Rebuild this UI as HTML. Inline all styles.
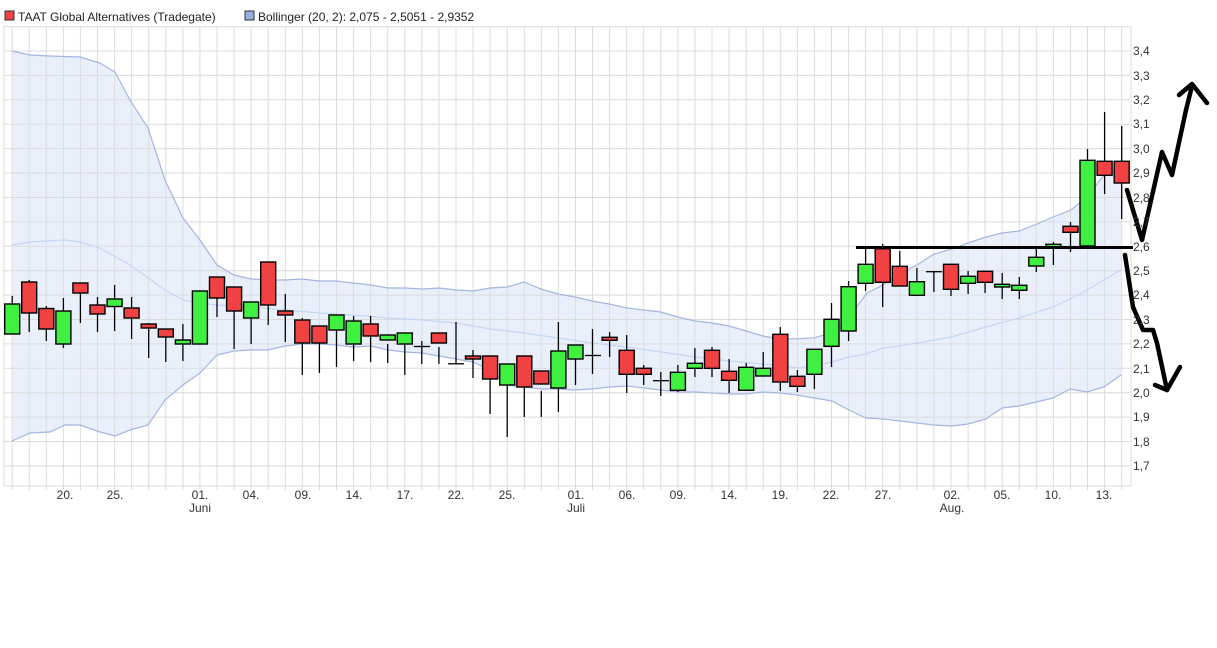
<!DOCTYPE html>
<html><head><meta charset="utf-8"><style>
html,body{margin:0;padding:0;background:#fff;}
svg{display:block;font-family:"Liberation Sans",sans-serif;}
.g line{stroke:#dcdcdc;stroke-width:1}
.w line{stroke:#000;stroke-width:1.3}
.r{fill:#f04242;stroke:#000;stroke-width:1.4}
.n{fill:#40f040;stroke:#000;stroke-width:1.4}
.ax text{font-size:12px;fill:#333}
</style></head><body>
<svg width="1217" height="648" viewBox="0 0 1217 648">
<rect x="5" y="11" width="9" height="9" fill="#f04242" stroke="#333" stroke-width="1"/>
<text x="18" y="21" font-size="12" fill="#222">TAAT Global Alternatives (Tradegate)</text>
<rect x="245" y="11" width="9" height="9" fill="#98aee0" stroke="#333" stroke-width="1"/>
<text x="258" y="21" font-size="12" fill="#222">Bollinger (20, 2): 2,075 - 2,5051 - 2,9352</text>

<polygon fill="#e9f0fc" points="12,51 30,55 50,56 80,57 100,63 115,72 130,100 148,128 165,180 183,218 200,240 217,265 234,275 251,279 268,280 285,280 302,279 319,281 336,281 353,283 371,285 388,288 405,288 422,289 439,288 456,290 473,291 490,288 507,287 524,282 541,289 558,294 575,297 592,301 609,304 627,308 644,310 661,312 678,317 695,321 712,323 729,326 746,331 763,336 780,339 800,338.7 814,337.7 832,333 849,317 867,293 883,285 900,273 917,265 934,254 952,249 968,243 986,237 1002,233 1019,231 1037,224 1053,217 1071,210 1087,197 1104,175 1121,167 1121,375 1104,387 1087,392 1070,389 1053,398 1036,402 1019,406 1002,408 986,419 968,424 952,426 934,425 917,423 900,421 883,419 866,418 849,410 832,401 814,398 797,395 780,393 763,392 746,394 729,394 712,393 695,392 678,392 661,390 644,388 627,386 609,387 592,389 575,390 558,389 541,389 524,387 507,385 490,370 473,362 456,359 439,356 422,353 405,352 388,350 371,346 353,347 336,345 319,344 302,344 285,346 268,350 251,350 234,351 217,355 200,373 183,385 165,400 148,425 130,430 115,436 100,432 80,425 65,425 50,432 30,433 12,441"/>

<g class="g">
<line x1="4" y1="26.6" x2="1131" y2="26.6"/><line x1="4" y1="51" x2="1131" y2="51"/><line x1="4" y1="75.4" x2="1131" y2="75.4"/><line x1="4" y1="99.8" x2="1131" y2="99.8"/><line x1="4" y1="124.2" x2="1131" y2="124.2"/><line x1="4" y1="148.6" x2="1131" y2="148.6"/><line x1="4" y1="173" x2="1131" y2="173"/><line x1="4" y1="197.5" x2="1131" y2="197.5"/><line x1="4" y1="221.9" x2="1131" y2="221.9"/><line x1="4" y1="246.3" x2="1131" y2="246.3"/><line x1="4" y1="270.7" x2="1131" y2="270.7"/><line x1="4" y1="295.1" x2="1131" y2="295.1"/><line x1="4" y1="319.5" x2="1131" y2="319.5"/><line x1="4" y1="343.9" x2="1131" y2="343.9"/><line x1="4" y1="368.3" x2="1131" y2="368.3"/><line x1="4" y1="392.7" x2="1131" y2="392.7"/><line x1="4" y1="417.1" x2="1131" y2="417.1"/><line x1="4" y1="441.5" x2="1131" y2="441.5"/><line x1="4" y1="465.9" x2="1131" y2="465.9"/><line x1="4" y1="486" x2="1131" y2="486"/>
<line x1="4" y1="26" x2="4" y2="486"/><line x1="1131" y1="26" x2="1131" y2="486"/>
<line x1="12.2" y1="26" x2="12.2" y2="490"/><line x1="29.2" y1="26" x2="29.2" y2="490"/><line x1="46.3" y1="26" x2="46.3" y2="490"/><line x1="63.4" y1="26" x2="63.4" y2="490"/><line x1="80.4" y1="26" x2="80.4" y2="490"/><line x1="97.5" y1="26" x2="97.5" y2="490"/><line x1="114.6" y1="26" x2="114.6" y2="490"/><line x1="131.6" y1="26" x2="131.6" y2="490"/><line x1="148.7" y1="26" x2="148.7" y2="490"/><line x1="165.8" y1="26" x2="165.8" y2="490"/><line x1="182.9" y1="26" x2="182.9" y2="490"/><line x1="199.9" y1="26" x2="199.9" y2="490"/><line x1="217" y1="26" x2="217" y2="490"/><line x1="234.1" y1="26" x2="234.1" y2="490"/><line x1="251.1" y1="26" x2="251.1" y2="490"/><line x1="268.2" y1="26" x2="268.2" y2="490"/><line x1="285.3" y1="26" x2="285.3" y2="490"/><line x1="302.3" y1="26" x2="302.3" y2="490"/><line x1="319.4" y1="26" x2="319.4" y2="490"/><line x1="336.5" y1="26" x2="336.5" y2="490"/><line x1="353.6" y1="26" x2="353.6" y2="490"/><line x1="370.6" y1="26" x2="370.6" y2="490"/><line x1="387.7" y1="26" x2="387.7" y2="490"/><line x1="404.8" y1="26" x2="404.8" y2="490"/><line x1="421.8" y1="26" x2="421.8" y2="490"/><line x1="438.9" y1="26" x2="438.9" y2="490"/><line x1="456" y1="26" x2="456" y2="490"/><line x1="473" y1="26" x2="473" y2="490"/><line x1="490.1" y1="26" x2="490.1" y2="490"/><line x1="507.2" y1="26" x2="507.2" y2="490"/><line x1="524.3" y1="26" x2="524.3" y2="490"/><line x1="541.3" y1="26" x2="541.3" y2="490"/><line x1="558.4" y1="26" x2="558.4" y2="490"/><line x1="575.5" y1="26" x2="575.5" y2="490"/><line x1="592.5" y1="26" x2="592.5" y2="490"/><line x1="609.6" y1="26" x2="609.6" y2="490"/><line x1="626.7" y1="26" x2="626.7" y2="490"/><line x1="643.7" y1="26" x2="643.7" y2="490"/><line x1="660.8" y1="26" x2="660.8" y2="490"/><line x1="677.9" y1="26" x2="677.9" y2="490"/><line x1="694.9" y1="26" x2="694.9" y2="490"/><line x1="712" y1="26" x2="712" y2="490"/><line x1="729.1" y1="26" x2="729.1" y2="490"/><line x1="746.2" y1="26" x2="746.2" y2="490"/><line x1="763.2" y1="26" x2="763.2" y2="490"/><line x1="780.3" y1="26" x2="780.3" y2="490"/><line x1="797.4" y1="26" x2="797.4" y2="490"/><line x1="814.4" y1="26" x2="814.4" y2="490"/><line x1="831.5" y1="26" x2="831.5" y2="490"/><line x1="848.6" y1="26" x2="848.6" y2="490"/><line x1="865.6" y1="26" x2="865.6" y2="490"/><line x1="882.7" y1="26" x2="882.7" y2="490"/><line x1="899.8" y1="26" x2="899.8" y2="490"/><line x1="916.9" y1="26" x2="916.9" y2="490"/><line x1="933.9" y1="26" x2="933.9" y2="490"/><line x1="951" y1="26" x2="951" y2="490"/><line x1="968.1" y1="26" x2="968.1" y2="490"/><line x1="985.1" y1="26" x2="985.1" y2="490"/><line x1="1002.2" y1="26" x2="1002.2" y2="490"/><line x1="1019.3" y1="26" x2="1019.3" y2="490"/><line x1="1036.3" y1="26" x2="1036.3" y2="490"/><line x1="1053.4" y1="26" x2="1053.4" y2="490"/><line x1="1070.5" y1="26" x2="1070.5" y2="490"/><line x1="1087.5" y1="26" x2="1087.5" y2="490"/><line x1="1104.6" y1="26" x2="1104.6" y2="490"/><line x1="1121.7" y1="26" x2="1121.7" y2="490"/>
</g>

<polyline fill="none" stroke="#a3b6e2" stroke-width="1.2" points="12,51 30,55 50,56 80,57 100,63 115,72 130,100 148,128 165,180 183,218 200,240 217,265 234,275 251,279 268,280 285,280 302,279 319,281 336,281 353,283 371,285 388,288 405,288 422,289 439,288 456,290 473,291 490,288 507,287 524,282 541,289 558,294 575,297 592,301 609,304 627,308 644,310 661,312 678,317 695,321 712,323 729,326 746,331 763,336 780,339 800,338.7 814,337.7 832,333 849,317 867,293 883,285 900,273 917,265 934,254 952,249 968,243 986,237 1002,233 1019,231 1037,224 1053,217 1071,210 1087,197 1104,175 1121,167"/>
<polyline fill="none" stroke="#a3b6e2" stroke-width="1.2" points="1121,375 1104,387 1087,392 1070,389 1053,398 1036,402 1019,406 1002,408 986,419 968,424 952,426 934,425 917,423 900,421 883,419 866,418 849,410 832,401 814,398 797,395 780,393 763,392 746,394 729,394 712,393 695,392 678,392 661,390 644,388 627,386 609,387 592,389 575,390 558,389 541,389 524,387 507,385 490,370 473,362 456,359 439,356 422,353 405,352 388,350 371,346 353,347 336,345 319,344 302,344 285,346 268,350 251,350 234,351 217,355 200,373 183,385 165,400 148,425 130,430 115,436 100,432 80,425 65,425 50,432 30,433 12,441"/>
<polyline fill="none" stroke="#c5d5f5" stroke-width="1.2" points="12,245 30,242 65,240 80,242 100,248 130,265 165,290 183,300 200,303 217,305 251,307 285,310 319,313 353,315 388,318 422,320 456,323 490,329 524,333 558,338 592,343 627,347 661,352 695,357 729,361 763,364 800,368 832,362 849,357 866,354 883,348 900,346 951,337 986,327 1019,318 1053,307 1070,299 1087,290 1104,280 1121,270"/>

<g class="w">
<line x1="12.2" y1="296" x2="12.2" y2="334"/><line x1="29.2" y1="280" x2="29.2" y2="332"/><line x1="46.3" y1="306" x2="46.3" y2="341"/><line x1="63.4" y1="298" x2="63.4" y2="348"/><line x1="80.4" y1="291" x2="80.4" y2="323"/><line x1="97.5" y1="297" x2="97.5" y2="332"/><line x1="114.6" y1="285" x2="114.6" y2="331"/><line x1="131.6" y1="297" x2="131.6" y2="339"/><line x1="148.7" y1="323" x2="148.7" y2="358"/><line x1="165.8" y1="330" x2="165.8" y2="362"/><line x1="182.9" y1="324" x2="182.9" y2="361"/><line x1="217" y1="283" x2="217" y2="317"/><line x1="234.1" y1="296" x2="234.1" y2="349"/><line x1="251.1" y1="311" x2="251.1" y2="344"/><line x1="268.2" y1="264" x2="268.2" y2="325"/><line x1="285.3" y1="294" x2="285.3" y2="342"/><line x1="302.3" y1="318" x2="302.3" y2="375"/><line x1="319.4" y1="328" x2="319.4" y2="373"/><line x1="336.5" y1="327" x2="336.5" y2="367"/><line x1="353.6" y1="316" x2="353.6" y2="361"/><line x1="370.6" y1="316" x2="370.6" y2="362"/><line x1="387.7" y1="344" x2="387.7" y2="363"/><line x1="404.8" y1="341" x2="404.8" y2="375"/><line x1="421.8" y1="341" x2="421.8" y2="364"/><line x1="438.9" y1="347" x2="438.9" y2="364"/><line x1="456" y1="322" x2="456" y2="364"/><line x1="473" y1="350" x2="473" y2="378"/><line x1="490.1" y1="362" x2="490.1" y2="414"/><line x1="507.2" y1="383" x2="507.2" y2="437"/><line x1="524.3" y1="366" x2="524.3" y2="417"/><line x1="541.3" y1="391" x2="541.3" y2="417"/><line x1="558.4" y1="322" x2="558.4" y2="412"/><line x1="575.5" y1="350" x2="575.5" y2="385"/><line x1="592.5" y1="329" x2="592.5" y2="374"/><line x1="609.6" y1="332" x2="609.6" y2="357"/><line x1="626.7" y1="335" x2="626.7" y2="393"/><line x1="643.7" y1="365" x2="643.7" y2="385"/><line x1="660.8" y1="372" x2="660.8" y2="396"/><line x1="677.9" y1="365" x2="677.9" y2="392"/><line x1="694.9" y1="348" x2="694.9" y2="377"/><line x1="712" y1="347" x2="712" y2="377"/><line x1="729.1" y1="359" x2="729.1" y2="393"/><line x1="746.2" y1="363" x2="746.2" y2="390"/><line x1="763.2" y1="352" x2="763.2" y2="376"/><line x1="780.3" y1="327" x2="780.3" y2="391"/><line x1="797.4" y1="370" x2="797.4" y2="392"/><line x1="814.4" y1="349" x2="814.4" y2="389"/><line x1="831.5" y1="303" x2="831.5" y2="367"/><line x1="848.6" y1="281" x2="848.6" y2="341"/><line x1="865.6" y1="249" x2="865.6" y2="291"/><line x1="882.7" y1="244" x2="882.7" y2="307"/><line x1="899.8" y1="251" x2="899.8" y2="286"/><line x1="916.9" y1="268" x2="916.9" y2="295"/><line x1="933.9" y1="272" x2="933.9" y2="292"/><line x1="951" y1="264" x2="951" y2="296"/><line x1="968.1" y1="271" x2="968.1" y2="294"/><line x1="985.1" y1="271" x2="985.1" y2="293"/><line x1="1002.2" y1="273" x2="1002.2" y2="299"/><line x1="1019.3" y1="277" x2="1019.3" y2="299"/><line x1="1036.3" y1="247" x2="1036.3" y2="272"/><line x1="1053.4" y1="242" x2="1053.4" y2="265"/><line x1="1070.5" y1="222" x2="1070.5" y2="252"/><line x1="1087.5" y1="149" x2="1087.5" y2="246"/><line x1="1104.6" y1="112" x2="1104.6" y2="194"/><line x1="1121.7" y1="126" x2="1121.7" y2="219"/>
<line x1="653" y1="380.7" x2="669" y2="380.7" stroke-width="2"/><line x1="414" y1="346.5" x2="430" y2="346.5" stroke-width="2"/><line x1="448" y1="363.8" x2="464" y2="363.8" stroke-width="2"/><line x1="585" y1="355.5" x2="601" y2="355.5" stroke-width="2"/><line x1="926" y1="271.7" x2="942" y2="271.7" stroke-width="2"/>
</g>
<g>
<rect class="n" x="4.7" y="304" width="15" height="30"/>
<rect class="r" x="21.7" y="282" width="15" height="31"/>
<rect class="r" x="38.8" y="308.5" width="15" height="20.5"/>
<rect class="n" x="55.9" y="311" width="15" height="33"/>
<rect class="r" x="72.9" y="283" width="15" height="10"/>
<rect class="r" x="90" y="305" width="15" height="9"/>
<rect class="n" x="107.1" y="299" width="15" height="7.5"/>
<rect class="r" x="124.1" y="308" width="15" height="10"/>
<rect class="r" x="141.2" y="324" width="15" height="4"/>
<rect class="r" x="158.3" y="329" width="15" height="8"/>
<rect class="n" x="175.4" y="340" width="15" height="4"/>
<rect class="n" x="192.4" y="291" width="15" height="53"/>
<rect class="r" x="209.5" y="277" width="15" height="21"/>
<rect class="r" x="226.6" y="287" width="15" height="24"/>
<rect class="n" x="243.6" y="302" width="15" height="16"/>
<rect class="r" x="260.7" y="262" width="15" height="43"/>
<rect class="r" x="277.8" y="311" width="15" height="4"/>
<rect class="r" x="294.8" y="320" width="15" height="23"/>
<rect class="r" x="311.9" y="326" width="15" height="17"/>
<rect class="n" x="329" y="315" width="15" height="15"/>
<rect class="n" x="346.1" y="321" width="15" height="23"/>
<rect class="r" x="363.1" y="324" width="15" height="12"/>
<rect class="n" x="380.2" y="335" width="15" height="5"/>
<rect class="n" x="397.3" y="333" width="15" height="11"/>
<rect class="r" x="431.4" y="333" width="15" height="10"/>
<rect class="r" x="465.5" y="356" width="15" height="3"/>
<rect class="r" x="482.6" y="356" width="15" height="23"/>
<rect class="n" x="499.7" y="364" width="15" height="21"/>
<rect class="r" x="516.8" y="356" width="15" height="31"/>
<rect class="r" x="533.8" y="371" width="15" height="13"/>
<rect class="n" x="550.9" y="351" width="15" height="37"/>
<rect class="n" x="568" y="345" width="15" height="14"/>
<rect class="r" x="602.1" y="337.3" width="15" height="3"/>
<rect class="r" x="619.2" y="350.3" width="15" height="24"/>
<rect class="r" x="636.2" y="368.3" width="15" height="6"/>
<rect class="n" x="670.4" y="372.3" width="15" height="18"/>
<rect class="n" x="687.4" y="363.3" width="15" height="5"/>
<rect class="r" x="704.5" y="350.3" width="15" height="18"/>
<rect class="r" x="721.6" y="371.3" width="15" height="9"/>
<rect class="n" x="738.7" y="367.3" width="15" height="23"/>
<rect class="n" x="755.7" y="368.3" width="15" height="7.7"/>
<rect class="r" x="772.8" y="334.3" width="15" height="47.7"/>
<rect class="r" x="789.9" y="376.3" width="15" height="10"/>
<rect class="n" x="806.9" y="349.3" width="15" height="25"/>
<rect class="n" x="824" y="319.3" width="15" height="27"/>
<rect class="n" x="841.1" y="286.7" width="15" height="44.3"/>
<rect class="n" x="858.1" y="264.3" width="15" height="19"/>
<rect class="r" x="875.2" y="248.7" width="15" height="33.6"/>
<rect class="r" x="892.3" y="266.3" width="15" height="19.7"/>
<rect class="n" x="909.4" y="281.7" width="15" height="13.6"/>
<rect class="r" x="943.5" y="264.3" width="15" height="25"/>
<rect class="n" x="960.6" y="276.3" width="15" height="7"/>
<rect class="r" x="977.6" y="271.3" width="15" height="11"/>
<rect class="n" x="994.7" y="284.3" width="15" height="2.7"/>
<rect class="n" x="1011.8" y="285.3" width="15" height="5"/>
<rect class="n" x="1028.8" y="257.3" width="15" height="8.7"/>
<rect class="n" x="1045.9" y="244.3" width="15" height="2.7"/>
<rect class="r" x="1063" y="226.3" width="15" height="6"/>
<rect class="n" x="1080" y="160.3" width="15" height="85.7"/>
<rect class="r" x="1097.1" y="161.3" width="15" height="14"/>
<rect class="r" x="1114.2" y="161.3" width="15" height="21.7"/>
</g>

<line x1="856" y1="247.5" x2="1133" y2="247.5" stroke="#000" stroke-width="3"/>

<g fill="none" stroke="#000" stroke-width="4.5" stroke-linejoin="round" stroke-linecap="round">
<polyline points="1127,190 1142,240 1162,152 1172,175 1186,110 1192,86"/>
<polyline points="1179,95 1192,84 1207,103"/>
<polyline points="1125,255 1133,307 1143,330 1153,330 1157,343 1167,390"/>
<polyline points="1155,385 1167,390 1180,367"/>
</g>

<g class="ax">
<text x="1133" y="55">3,4</text><text x="1133" y="80">3,3</text><text x="1133" y="104">3,2</text><text x="1133" y="128">3,1</text><text x="1133" y="153">3,0</text><text x="1133" y="177">2,9</text><text x="1133" y="202">2,8</text><text x="1133" y="226">2,7</text><text x="1133" y="251">2,6</text><text x="1133" y="275">2,5</text><text x="1133" y="299">2,4</text><text x="1133" y="324">2,3</text><text x="1133" y="348">2,2</text><text x="1133" y="373">2,1</text><text x="1133" y="397">2,0</text><text x="1133" y="421">1,9</text><text x="1133" y="446">1,8</text><text x="1133" y="470">1,7</text>
</g>
<g class="ax" text-anchor="middle">
<text x="65" y="499">20.</text><text x="115" y="499">25.</text><text x="200" y="499">01.</text><text x="251" y="499">04.</text><text x="303" y="499">09.</text><text x="354" y="499">14.</text><text x="405" y="499">17.</text><text x="456" y="499">22.</text><text x="507" y="499">25.</text><text x="576" y="499">01.</text><text x="627" y="499">06.</text><text x="678" y="499">09.</text><text x="729" y="499">14.</text><text x="780" y="499">19.</text><text x="831" y="499">22.</text><text x="883" y="499">27.</text><text x="952" y="499">02.</text><text x="1002" y="499">05.</text><text x="1053" y="499">10.</text><text x="1104" y="499">13.</text>
<text x="200" y="512">Juni</text><text x="576" y="512">Juli</text><text x="952" y="512">Aug.</text>
</g>
</svg>
</body></html>
